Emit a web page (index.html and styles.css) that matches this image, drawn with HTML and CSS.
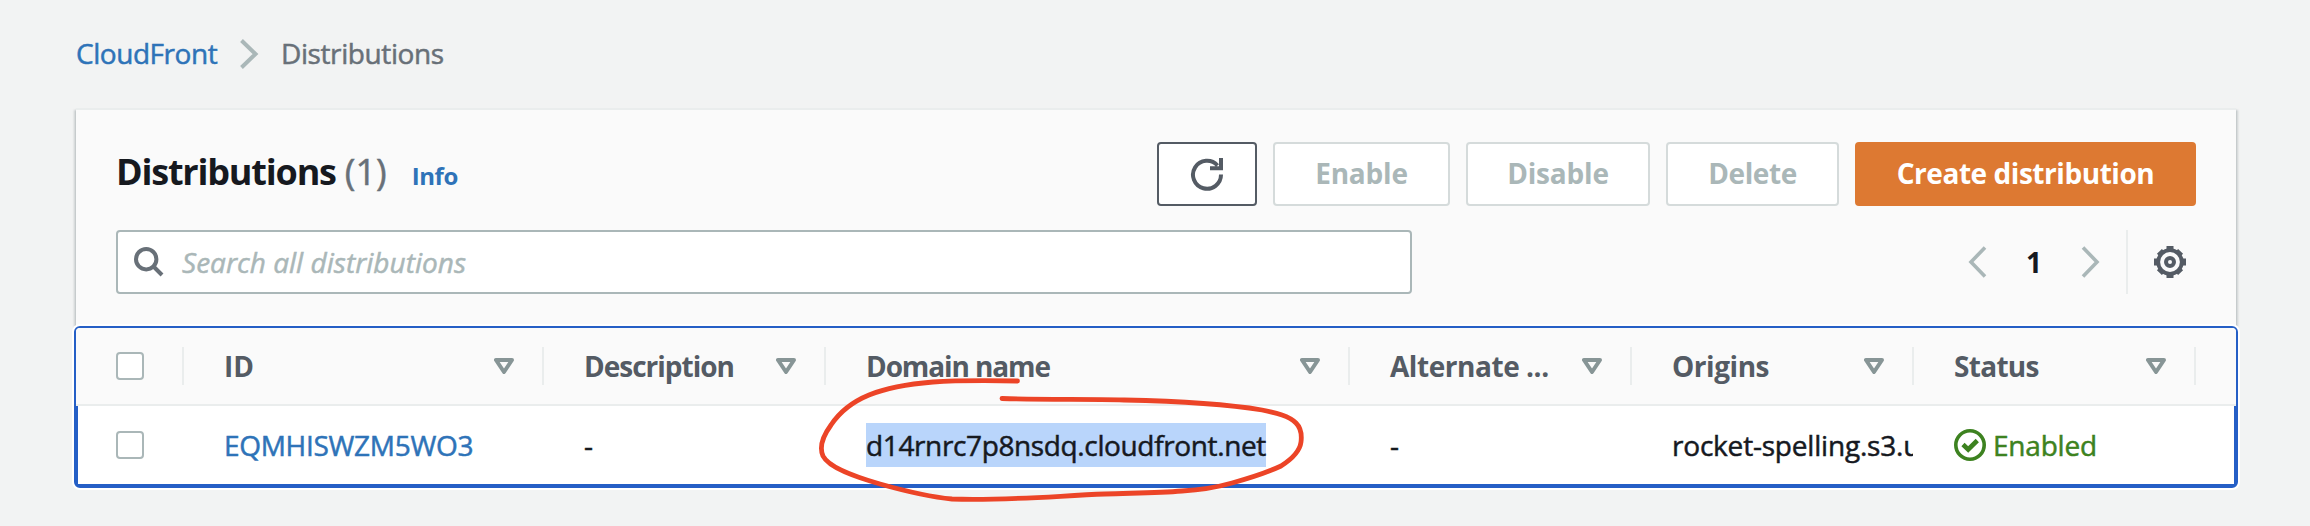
FILE: index.html
```html
<!DOCTYPE html>
<html lang="en">
<head>
<meta charset="utf-8">
<title>CloudFront Distributions</title>
<link rel="stylesheet" href="styles.css">
</head>
<body>
<nav class="breadcrumb">
  <a class="crumb-link">CloudFront</a>
  <svg class="crumb-sep" width="22" height="32" viewBox="0 0 22 32"><path d="M2.5 2.5 16.5 16 2.5 29.5"/></svg>
  <span class="crumb-here">Distributions</span>
</nav>
<main class="panel">
  <section class="panel-head">
    <div class="title-row">
      <h1 class="title">Distributions</h1>
      <span class="count">(1)</span>
      <a class="info">Info</a>
      <div class="actions">
        <button class="btn refresh" aria-label="Refresh">
          <svg width="34" height="34" viewBox="0 0 34 34"><path d="M31 17.500A14 14 0 1 1 27.500 8.500M31 1v10.200H20" /></svg>
        </button>
        <button class="btn disabled enable">Enable</button>
        <button class="btn disabled disable">Disable</button>
        <button class="btn disabled delete">Delete</button>
        <button class="btn primary">Create distribution</button>
      </div>
    </div>
    <div class="filter-row">
      <div class="search">
        <svg width="30" height="30" viewBox="0 0 30 30"><circle cx="12.200" cy="12.200" r="10.200"/><path d="M19.500 19.500 28 28"/></svg>
        <span class="placeholder">Search all distributions</span>
      </div>
      <div class="pager">
        <svg width="20" height="32" viewBox="0 0 20 32"><path d="M17 1.500 3 16 17 30.500"/></svg>
        <span class="page">1</span>
        <svg width="20" height="32" viewBox="0 0 20 32"><path d="M3 1.500 17 16 3 30.500"/></svg>
      </div>
      <div class="settings">
        <svg width="32" height="32" viewBox="0 0 32 32"><circle cx="16" cy="16" r="11.800"/><circle class="hub" cx="16" cy="16" r="4"/><path class="teeth" d="M16 0v4.500M16 27.500V32M0 16h4.500M27.500 16H32M5.400 5.400l2.600 2.600M24 24l2.600 2.600M26.600 5.400 24 8M8 24l-2.600 2.600"/></svg>
      </div>
    </div>
  </section>
  <section class="table">
    <div class="row head">
      <div class="cell pick"><i class="box"></i></div>
      <div class="cell">ID<svg class="sort" width="20" height="16" viewBox="0 0 20 16"><path d="M2 2h16l-8 12z"/></svg></div>
      <div class="cell"><span class="t-desc">Description</span><svg class="sort" width="20" height="16" viewBox="0 0 20 16"><path d="M2 2h16l-8 12z"/></svg></div>
      <div class="cell"><span class="t-domain">Domain name</span><svg class="sort" width="20" height="16" viewBox="0 0 20 16"><path d="M2 2h16l-8 12z"/></svg></div>
      <div class="cell"><span class="t-alt">Alternate ...</span><svg class="sort" width="20" height="16" viewBox="0 0 20 16"><path d="M2 2h16l-8 12z"/></svg></div>
      <div class="cell"><span class="t-orig">Origins</span><svg class="sort" width="20" height="16" viewBox="0 0 20 16"><path d="M2 2h16l-8 12z"/></svg></div>
      <div class="cell"><span class="t-stat">Status</span><svg class="sort" width="20" height="16" viewBox="0 0 20 16"><path d="M2 2h16l-8 12z"/></svg></div>
    </div>
    <div class="row body">
      <div class="cell pick"><i class="box"></i></div>
      <div class="cell"><a class="id">EQMHISWZM5WO3</a></div>
      <div class="cell">-</div>
      <div class="cell"><span class="selected">d14rnrc7p8nsdq.cloudfront.net</span></div>
      <div class="cell">-</div>
      <div class="cell origin"><span class="clip">rocket-spelling.s3.u</span></div>
      <div class="cell status">
        <svg width="32" height="32" viewBox="0 0 32 32"><circle cx="16" cy="16" r="14.200"/><path d="M9 15.500l5.200 5L23.300 11.500"/></svg>
        <span class="enabled">Enabled</span>
      </div>
    </div>
  </section>
</main>
<svg class="marker" width="500" height="140" viewBox="810 372 500 140"><path d="M1017.500 381C985 380.500 955 380.500 933 382C908 384 886 388 869 395C852 402 839 413 831 425C823 436 819 447 823 456C829 468 856 477 880 484C905 491 930 497 952 499C1003 501 1055 496 1105 494C1132 493 1158 493 1182 491C1200 490 1218 487 1232 483C1250 478 1266 473 1281 466C1292 459 1300 450 1301 442C1302 434 1301 428 1296 423C1289 416 1277 413 1262 410C1220 403 1170 401 1124 400C1084 399 1042 400 1002 398.500"/></svg>
</body>
</html>
```

FILE: styles.css
```css
* { box-sizing: border-box; }
body {
  margin: 0;
  height: 526px;
  overflow: hidden;
  background: #f2f3f3;
  color: #16191f;
  font: 28px/40px "Open Sans", "Noto Sans", sans-serif;
}
svg { display: block; flex: none; fill: none; }
a { color: #2e73b8; }

.breadcrumb {
  display: flex;
  align-items: center;
  height: 108px;
  padding: 0 76px 2px;
}
.breadcrumb, .count, .placeholder, .body { -webkit-text-stroke: .5px; }
.crumb-link { width: 143px; letter-spacing: -.45px; }
.crumb-sep { margin: 2px 20px 0 20px; stroke: #aab7b8; stroke-width: 4; }
.crumb-here { color: #687078; letter-spacing: -.4px; }

.panel { padding: 0 72px 0 74px; }
.panel-head {
  height: 218px;
  margin: 0 2px;
  padding: 32px 40px 0;
  background: #fafafa;
  border-top: 2px solid #eaeded;
  box-shadow: 0 2px 2px rgba(0, 28, 36, .15), 2px 2px 2px rgba(0, 28, 36, .15), -2px 2px 2px rgba(0, 28, 36, .15);
}
.title-row { display: flex; align-items: center; height: 64px; }
.title { margin: -5px 9px 0 0; font-size: 36px; line-height: 48px; letter-spacing: -1.2px; }
.count { margin-top: -5px; font-size: 36px; line-height: 48px; color: #687078; }
.info { margin: 4px 0 0 25px; font-size: 24px; font-weight: 700; letter-spacing: -.4px; }
.actions { display: flex; gap: 16px; margin-left: auto; }
.btn {
  display: flex;
  align-items: center;
  justify-content: center;
  height: 64px;
  padding: 0 0 2px;
  background: #fff;
  border: 2px solid #d5dbdb;
  border-radius: 4px;
  color: #aab7b8;
  font: 700 28px/40px "Open Sans", "Noto Sans", sans-serif;
}
.refresh { width: 100px; padding: 0; border-color: #545b64; }
.refresh svg { stroke: #545b64; stroke-width: 4; }
.enable { width: 177px; letter-spacing: -.2px; }
.disable { width: 184px; letter-spacing: -.2px; }
.delete { width: 173px; letter-spacing: -.4px; }
.primary { width: 341px; border-color: #dd7932; background: #dd7932; color: #fff; letter-spacing: -.45px; }

.filter-row { display: flex; align-items: center; height: 64px; margin-top: 24px; }
.search {
  display: flex;
  align-items: center;
  width: 1296px;
  height: 64px;
  padding-left: 16px;
  background: #fff;
  border: 2px solid #aab7b8;
  border-radius: 4px;
}
.search svg { stroke: #687078; stroke-width: 4; }
.placeholder { margin-left: 18px; color: #aab7b8; font-style: italic; letter-spacing: .02px; }
.pager { display: flex; align-items: center; margin-left: auto; }
.pager svg { stroke: #aab7b8; stroke-width: 3.600; }
.page { width: 92px; text-align: center; font-weight: 700; }
.settings {
  display: flex;
  align-items: center;
  height: 64px;
  margin-left: 26px;
  padding: 0 10px 0 26px;
  border-left: 2px solid #eaeded;
}
.settings svg { stroke: #545b64; stroke-width: 3.800; }
.settings .hub { stroke-width: 4; }
.settings .teeth { stroke-width: 7; }

/* Focused table: blue outline with a white halo */
.table {
  position: relative;
  height: 162px;
  background: #fff;
  border: 2px solid #255fc6;
  border-bottom-width: 4px;
  border-radius: 6px;
  box-shadow: 0 0 0 2px #fff;
}
.row { display: grid; grid-template-columns: 108px 360px 282px 524px 282px 282px 282px 40px; }
.head {
  height: 78px;
  background: #fafafa;
  border-bottom: 2px solid #eaeded;
  border-radius: 4px 4px 0 0;
  color: #545b64;
  font-weight: 700;
}
.body { height: 78px; box-shadow: inset 2px 0 #255fc6, inset -2px 0 #255fc6; }
.cell { display: flex; align-items: center; min-width: 0; padding-left: 40px; white-space: nowrap; }
.head .cell {
  height: 38px;
  margin-top: 19px;
  padding-right: 28px;
  padding-bottom: 1px;
  border-right: 2px solid #eaeded;
}
.head .pick { padding-bottom: 0; }
.sort { margin-left: auto; stroke: #879596; stroke-width: 4; stroke-linejoin: round; }
.box { width: 28px; height: 28px; background: #fff; border: 2px solid #aab7b8; border-radius: 4px; }
.t-desc { letter-spacing: -1px; }
.t-domain { letter-spacing: -1.1px; }
.t-alt, .t-orig { letter-spacing: -.45px; }
.t-stat { letter-spacing: -.7px; }
.id { letter-spacing: -.3px; }
.selected { width: 400px; background: #b9d5fb; letter-spacing: -.37px; line-height: 44px; }
.clip { width: 241px; overflow: hidden; letter-spacing: -.2px; }
.status svg { stroke: #3d8220; stroke-width: 3.600; }
.status path { stroke-width: 4.600; }
.enabled { margin-left: 7px; color: #3d8220; letter-spacing: -.2px; }

/* Hand-drawn highlight over the domain name */
.marker {
  position: absolute;
  left: 810px;
  top: 372px;
  stroke: #ec4427;
  stroke-width: 4.800;
  stroke-linecap: round;
  stroke-linejoin: round;
}
```
